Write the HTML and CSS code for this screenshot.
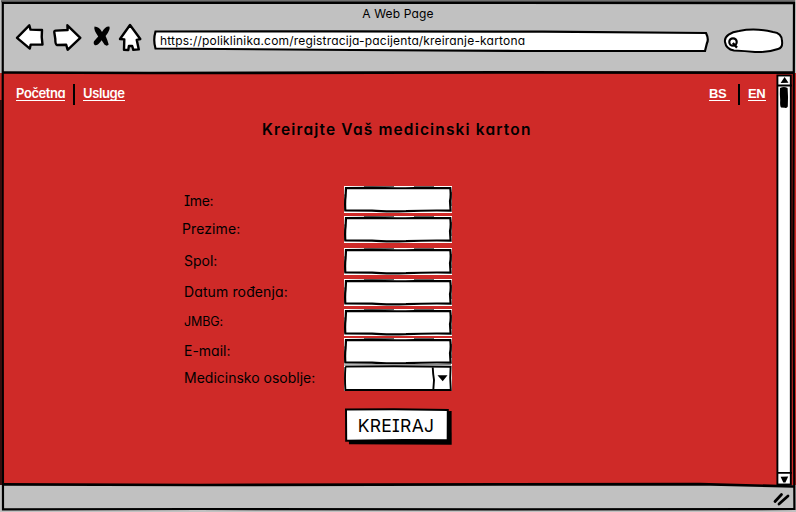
FILE: index.html
```html
<!DOCTYPE html>
<html lang="bs">
<head>
<meta charset="utf-8">
<title>A Web Page</title>
<link rel="stylesheet" href="styles.css">
</head>
<body>
<svg class="defs" width="0" height="0" aria-hidden="true">
  <symbol id="box" viewBox="0 0 108 27">
    <rect width="108" height="27" fill="#fff"/>
    <path d="M20 .6H50M70 .6H90" fill="none" stroke="#555" stroke-width="1"/>
    <path d="M0 8V24M107.6 6V20" fill="none" stroke="#666" stroke-width="1"/>
    <path d="M2 2.1L28 1.8Q50 2.6 70 2L106.3 2.2Q107.2 10 106 15L106.6 24.6Q82 24.2 62 25.2Q40 25.8 28 24.6L1.3 24.4Q.8 16 1.6 10Z" fill="#fff" stroke="#000" stroke-width="2.2"/>
  </symbol>
</svg>
<div class="window">
  <header class="chrome">
    <div class="title"><span>A Web Page</span></div>
    <div class="toolbar">
      <svg class="nav" width="140" height="32" viewBox="0 0 140 32">
        <g fill="#fff" stroke="#000" stroke-width="2.4" stroke-linejoin="round">
          <path d="M2 15.8L14.3 3.3L15.5 7.6L27 8Q26.2 15 27.5 22.5L15.7 22.6L14.8 26.6Z"/>
          <path d="M39.3 10.4Q39 8.4 41 8.6L52.6 8L52.4 3.3L65.3 15.8L52.6 27.8L51.2 22.8L42 23Q40.3 22.7 40.3 17Z"/>
          <path d="M105 17L115 3L125.3 17L121.7 17.8L123.8 27.4L118.3 27.8L117.2 24L113.9 24L113.3 28L109 27.8L109.3 17.4Z"/>
        </g>
        <path d="M79.5 4.6Q84.5 5 87 10Q90 4 94.3 4.4Q96 7 90.6 14Q92.5 18 93.7 22.5Q92 24.6 89.6 22.8L86.6 18.2Q83 23.8 80 23.2Q78 22 79 19.3L83.2 14.4Q78.4 8 79.5 4.6Z" fill="#000"/>
      </svg>
      <div class="address">
        <svg class="fill" viewBox="0 0 556 24" preserveAspectRatio="none"><path d="M2.5 2.5L180 2.4L390 2.7L553 4Q556 10 554 14L552 22L370 22L200 21L2.5 19.5Q0 11 2.5 2.5Z" fill="#fff" stroke="#000" stroke-width="2.2"/></svg>
        <span>https://poliklinika.com/registracija-pacijenta/kreiranje-kartona</span>
      </div>
      <svg class="search" width="62" height="26" viewBox="0 0 62 26">
        <path d="M2 14C1 8 8 4 16 3C26 1 40 1.6 50 4Q59 5 59 13Q60 20 55 21Q45 24.5 32 24Q22 23 11 22.5Q3 21 2 14Z" fill="#fff" stroke="#000" stroke-width="2"/>
        <circle cx="10" cy="14" r="3.7" fill="#fff" stroke="#000" stroke-width="2.2"/><path d="M9.8 15L14 19.6" stroke="#000" stroke-width="2.3"/>
      </svg>
    </div>
  </header>
  <div class="view">
    <main class="page">
      <nav class="links">
        <a class="home" href="#">Početna</a><i class="bar"></i><a class="services" href="#">Usluge</a>
        <span class="spacer"></span>
        <a class="bs" href="#">BS&nbsp;</a><i class="bar"></i><a class="en" href="#">EN</a>
      </nav>
      <h1><span>Kreirajte Vaš medicinski karton</span></h1>
      <form class="form">
        <div class="row r1"><label><span>Ime:</span></label><svg class="field"><use href="#box"/></svg></div>
        <div class="row r2"><label><span>Prezime:</span></label><svg class="field"><use href="#box"/></svg></div>
        <div class="row r3"><label><span>Spol:</span></label><svg class="field"><use href="#box"/></svg></div>
        <div class="row r4"><label><span>Datum rođenja:</span></label><svg class="field"><use href="#box"/></svg></div>
        <div class="row r5"><label><span>JMBG:</span></label><svg class="field"><use href="#box"/></svg></div>
        <div class="row r6"><label><span>E-mail:</span></label><svg class="field"><use href="#box"/></svg></div>
        <div class="row r7"><label><span>Medicinsko osoblje:</span></label>
          <svg class="field" viewBox="0 0 108 27"><rect width="108" height="27" fill="#fff"/><path d="M0 1L107 .6" stroke="#777"/><path d="M1.2 2.6L50 2.2L106.6 2.8L106.2 14L106.8 26L1.4 26Q.6 15 1.4 3M88.7 3Q89 10 90 16L89.3 26" fill="none" stroke="#000" stroke-width="1.9"/><path d="M93.5 11.3L103.5 11.3L98.7 17.2Z"/></svg></div>
        <button class="submit" type="button">
          <svg class="fill" viewBox="0 0 108 37"><path d="M4 5L107.6 3L107.7 36.8L5 36.3Z"/><path d="M2 1.6L50 1.3L103.8 1.9L103.7 32.3L60 32L2.2 32.8Z" fill="#fff" stroke="#000" stroke-width="2"/></svg>
          <span>KREIRAJ</span>
        </button>
      </form>
    </main>
    <svg class="scroll" width="20" height="413" viewBox="0 0 20 413">
      <rect x="1.4" y="2.5" width="13.4" height="409" fill="#fff" stroke="#000" stroke-width="1.9"/>
      <path d="M1 12.5H16M1 399.8H16" stroke="#000" stroke-width="1.8"/>
      <path d="M8.6 4L12.5 9.7L4.6 10ZM4.6 403.8L12.2 403.4L9.4 409.4L7.3 409.4Z"/>
      <path d="M4 15Q8 13 11.6 15Q12.4 24 11.8 33.5Q11 35.5 9 34.8L5 34.4Q3.8 33 4.2 27Q3.6 21 4 15Z"/>
    </svg>
  </div>
  <footer class="status"><svg width="18" height="16" viewBox="0 0 18 16"><path d="M2 11.5L8.5 4.5M6 14L15 6" stroke="#000" stroke-width="2.8" stroke-linecap="round"/></svg></footer>
  <svg class="frame" viewBox="0 0 796 512" aria-hidden="true">
    <path d="M1 1.2L795 1.2" fill="none" stroke="#555" stroke-width="2"/>
    <path d="M2.8 3L300 2.8L794 3.2L793.3 250L794.4 509L500 509.4L200 509L3 509.3L2.6 250Z" fill="none" stroke="#000" stroke-width="2.2"/>
    <path d="M1 100V485" stroke="#3a0c0c" stroke-width="2"/>
    <path d="M2 72.5L150 73L500 72.3L794 72.6" fill="none" stroke="#000" stroke-width="2.7"/>
    <path d="M2 484.3L200 485L500 484.4L700 484.2L794 486.5" fill="none" stroke="#000" stroke-width="2.7"/>
  </svg>
</div>
</body>
</html>
```
FILE: styles.css
```css
* { box-sizing: border-box; }
body { margin: 0; font-family: Inter, "Noto Sans", sans-serif; font-feature-settings: "cv11", "cv08"; color: #000; }
svg { display: block; flex: none; }
.defs { position: absolute; }
.window { position: relative; width: 796px; height: 512px; display: flex; flex-direction: column; background: #c1c1c1; overflow: hidden; }
.frame { position: absolute; inset: 0; width: 796px; height: 512px; pointer-events: none; }
.chrome { height: 73px; }
.title { height: 23px; padding-top: 5px; text-align: center; font-size: 12px; line-height: 17px; letter-spacing: .15px; }
.toolbar { display: flex; align-items: flex-start; padding-left: 15px; }
.nav { margin-top: -1px; }
.address { position: relative; width: 556px; height: 24px; margin: 6px 14px 0 -2px; padding-left: 7px; font-size: 12px; line-height: 23px; white-space: nowrap; letter-spacing: .19px; }
.address span { position: relative; }
.fill { position: absolute; inset: 0; width: 100%; height: 100%; }
.search { margin-top: 5px; }
.view { height: 412px; display: flex; background: #cf2a28; }
.page { width: 776px; }
.status { display: flex; flex: 1; justify-content: flex-end; align-items: flex-start; padding: 5px 5px 0 0; }
.links { display: flex; height: 42px; padding: 10px 10px 0 16px; font-size: 13px; font-weight: 600; line-height: 20px; }
.links a { color: #fff; height: 18px; border-bottom: 1px solid #fff; text-decoration: none; white-space: nowrap; letter-spacing: -.4px; }
.home { width: 49px; }
.services { width: 42px; }
.links .bs, .links .en { font-family: "Liberation Sans", sans-serif; font-weight: 700; line-height: 21px; }
.bs { width: 21px; }
.en { width: 18px; }
.bar { width: 2px; height: 21px; margin: 1px 8px 0; background: #000; }
.spacer { flex: 1; }
h1 { margin: 0; padding-left: 262px; font-size: 15.5px; line-height: 29px; font-weight: 600; letter-spacing: 1.15px; white-space: nowrap; }
.form { padding: 42px 0 0 184px; }
.row { display: flex; height: 30px; }
.row label { width: 160px; font-size: 14px; line-height: 28px; white-space: nowrap; }
.field { width: 108px; height: 27px; }
.r1 label { line-height: 30px; letter-spacing: -.4px; }
.r2 { height: 32px; }
.r2 label { margin-left: -2px; width: 162px; line-height: 26px; letter-spacing: .1px; }
.r3 { height: 31px; }
.r3 label, .r4 label { line-height: 26px; }
.r4 label { letter-spacing: .12px; }
.r5 { height: 29px; }
.row.r5 label { font-size: 12.5px; line-height: 25px; letter-spacing: -.1px; }
.r6 { height: 26px; }
.r6 label { line-height: 26px; }
.submit { position: relative; display: block; width: 108px; height: 37px; margin: 14px 0 0 160px; padding: 0 4px 3px 0; border: 0; background: none; color: #000; font: 17.5px/34px Inter, sans-serif; font-feature-settings: "cv08"; letter-spacing: .3px; }
.submit span { position: relative; top: 1px; }
```
